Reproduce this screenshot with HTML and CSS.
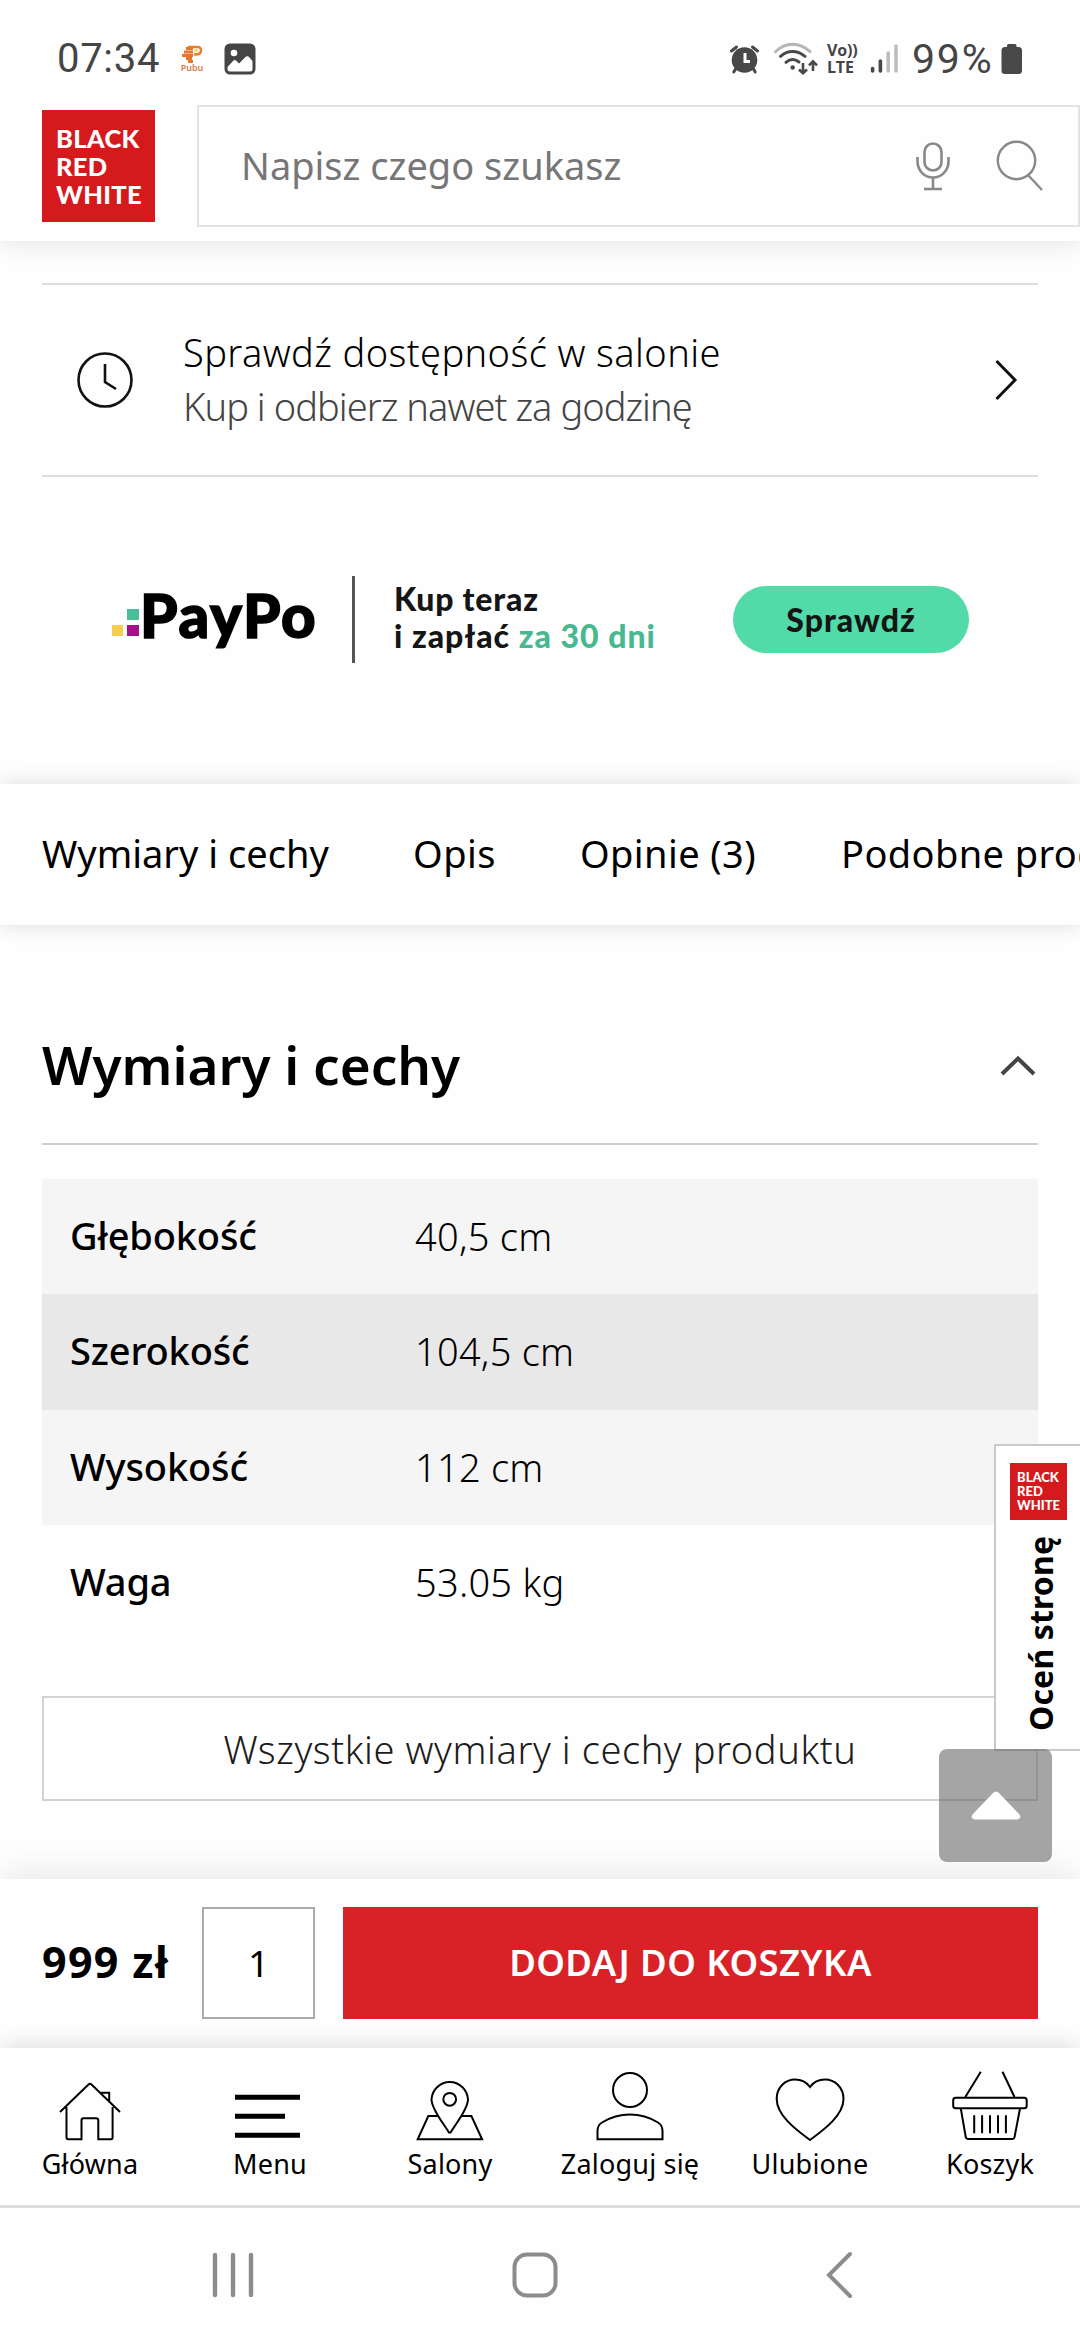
FILE: index.html
```html
<!DOCTYPE html>
<html lang="pl">
<head>
<meta charset="utf-8">
<title>Black Red White</title>
<link rel="stylesheet" href="styles.css">
</head>
<body>
<div class="app">
  <div class="status">
    <span class="clock">07:34</span>
    <span class="pubu">
      <svg width="22" height="18" viewBox="0 0 22 18"><path d="M5 3.500H12M3 7H12M1 10.500H12M5 13.500H11M7 16.500H12" fill="none" stroke="#e5752b" stroke-width="2.800"/><path d="M7 2H16.500Q20.500 2 20 6T13 9.500" fill="none" stroke="#ec7c26" stroke-width="2.400"/><path d="M13 4H17V7H13Z" fill="#f7dc7a"/></svg>
      <b>Pubu</b>
    </span>
    <svg class="gallery" width="32" height="32" viewBox="0 0 32 32"><rect x=".5" y=".5" width="31" height="31" rx="5.500" fill="#454545"/><circle cx="10" cy="10" r="3.300" fill="#fff"/><path d="M3.500 24 9.500 17.500Q11 16.500 12.500 18L15 20.500 21.500 14Q23.500 12.500 25.500 14.500L28.500 18V26Q28.500 28.500 26 28.500H6Q3.500 28.500 3.500 26Z" fill="#fff"/></svg>
    <svg class="alarm" width="34" height="36" viewBox="0 0 34 36"><circle cx="16.500" cy="19" r="12.800" fill="#484848"/><g fill="none" stroke="#484848" stroke-width="3" stroke-linecap="round"><path d="M3.500 10 8.500 6M29.500 10 24.500 6M7.500 28 5.800 31M25.500 28 27.200 31"/></g><path d="M17 12V20.500H22" fill="none" stroke="#fff" stroke-width="3"/></svg>
    <svg class="wifi" width="46" height="36" viewBox="0 0 46 36"><g fill="none" stroke="#484848" stroke-width="3" stroke-linecap="round"><path d="M2.500 10.700Q10 3.200 19.500 3.200T37 10.700" stroke="#b5b5b5"/><path d="M7.500 15.300Q13 10.500 19.500 10.500T32 15.300M13 21.300Q19.500 16 26 21"/></g><circle cx="19.700" cy="26.500" r="2.200" fill="#484848"/><path d="M30 22V32M26 28.500 30 32.300 34 28.500M40 30V20.500M36 24.300 40 20.300 44 24.300" fill="none" stroke="#484848" stroke-width="2.600"/></svg>
    <span class="volte"><b>Vo))</b><b>LTE</b></span>
    <svg class="signal" width="30" height="36" viewBox="0 0 30 36"><g fill="none" stroke="#484848" stroke-width="3.600" stroke-linecap="round"><path d="M2.600 27.500V30M10.400 20V30"/><path d="M18.200 12V30M26 5V30" stroke="#bdbdbd"/></g></svg>
    <span class="percent">99%</span>
    <svg class="battery" width="22" height="32" viewBox="0 0 22 32"><path d="M6 4V2.500Q6 1 7.500 1H14Q15.500 1 15.500 2.500V4H17.500Q21 4 21 7.500V27.500Q21 31 17.500 31H4Q.5 31 .5 27.500V7.500Q.5 4 4 4Z" fill="#484848"/></svg>
  </div>

  <header class="header">
    <div class="brand"><span>BLACK</span><span>RED</span><span>WHITE</span></div>
    <div class="search">
      <span class="placeholder">Napisz czego szukasz</span>
      <svg width="36" height="50" viewBox="0 0 36 50"><g fill="none" stroke="#888" stroke-width="2.600"><rect x="9.500" y="2.500" width="17" height="27" rx="8.500"/><path d="M2.500 16V20.500A15.500 16 0 0 0 33.500 20.500V16M18 36.500V48M9 48H27"/></g></svg>
      <svg class="loupe" width="50" height="54" viewBox="0 0 50 54"><g fill="none" stroke="#888" stroke-width="2.400"><circle cx="21.500" cy="21.500" r="18.700"/><path d="M33 36 47 51"/></g></svg>
    </div>
  </header>

  <main class="main">
    <div class="store">
      <svg width="58" height="58" viewBox="0 0 58 58"><g fill="none" stroke="#111" stroke-width="2.600"><circle cx="29" cy="29" r="26.500"/><path d="M29 13V31L40 38"/></g></svg>
      <div class="store-text">
        <span class="store-title">Sprawdź dostępność w salonie</span>
        <span class="store-sub">Kup i odbierz nawet za godzinę</span>
      </div>
      <svg width="24" height="42" viewBox="0 0 24 42"><path d="M2.500 2 21 21 2.500 40" fill="none" stroke="#111" stroke-width="3"/></svg>
    </div>

    <div class="paypo">
      <svg class="pixels" width="26" height="30" viewBox="0 0 26 30"><path d="M0 17H11V28H0Z" fill="#f6cd4c"/><path d="M15 17H27V28H15Z" fill="#a4108c"/><path d="M15 1H27V12H15Z" fill="#48be9a"/></svg>
      <span class="paypo-name">PayPo</span>
      <span class="rule"></span>
      <div class="paypo-text">
        <span class="line1">Kup teraz</span>
        <span class="line2">i zapłać <em>za 30 dni</em></span>
      </div>
      <span class="pill">Sprawdź</span>
    </div>

    <nav class="tabs">
      <span class="t1">Wymiary i cechy</span>
      <span class="t2">Opis</span>
      <span class="t3">Opinie (3)</span>
      <span class="t4">Podobne produkty</span>
    </nav>

    <section class="specs">
      <div class="specs-head">
        <h2>Wymiary i cechy</h2>
        <svg width="40" height="26" viewBox="0 0 40 26"><path d="M4 21 20 5.500 36 21" fill="none" stroke="#444" stroke-width="4"/></svg>
      </div>
      <dl class="table">
        <div class="row"><dt>Głębokość</dt><dd>40,5 cm</dd></div>
        <div class="row dark"><dt>Szerokość</dt><dd>104,5 cm</dd></div>
        <div class="row"><dt>Wysokość</dt><dd>112 cm</dd></div>
        <div class="row plain"><dt>Waga</dt><dd>53.05 kg</dd></div>
      </dl>
      <div class="all">Wszystkie wymiary i cechy produktu</div>
    </section>
  </main>

  <div class="buy">
    <span class="price">999 zł</span>
    <span class="qty">1</span>
    <span class="add">DODAJ DO KOSZYKA</span>
  </div>

  <nav class="bottom">
    <div class="item"><svg width="80" height="76" viewBox="0 0 80 76"><path d="M10 43 38.500 15.500Q40 14.200 41.500 15.500L70 43M16.500 38V68.500Q16.500 70.300 18.300 70.300H31.500V51.500Q31.500 49.300 33.500 49.300H46Q48.300 49.300 48.300 51.500V70.300H61Q62.600 70.300 62.600 68.500V38M51 23.700H59.200V32"/></svg><span>Główna</span></div>
    <div class="item"><svg width="80" height="76" viewBox="0 0 80 76"><path d="M5 28.300H70M5 47.300H55M5 66.300H70" stroke-width="5"/></svg><span>Menu</span></div>
    <div class="item"><svg width="80" height="76" viewBox="0 0 80 76"><path d="M38 62C33 54 21.500 40 21.500 30.300A18.300 18.600 0 0 1 58 30.300C58 40 46.500 54 41.500 62Q39.700 65.500 38 62ZM28 47H18.300L7.700 70.300H72.100L61.400 47H51.400"/><circle cx="39.700" cy="30.300" r="6.400"/></svg><span>Salony</span></div>
    <div class="item"><svg width="80" height="76" viewBox="0 0 80 76"><circle cx="40" cy="21" r="17"/><path d="M7.500 70.300V62Q7.500 56 12 53.500 25 45.500 40 45.500T68 53.500Q72.500 56 72.500 62V70.300Z"/></svg><span>Zaloguj się</span></div>
    <div class="item"><svg width="80" height="76" viewBox="0 0 80 76"><path d="M40 71C25 60 6.700 46 6.700 30 6.700 18 15.500 10.500 25 10.500 31.500 10.500 36.500 13 40 18 43.500 13 48.500 10.500 55 10.500 64.500 10.500 73.500 18 73.500 30 73.500 46 55 60 40 71Z"/></svg><span>Ulubione</span></div>
    <div class="item"><svg width="80" height="76" viewBox="0 0 80 76"><path d="M30.800 2.700 15.300 28M52.500 2.700 64.500 28M10.800 39.500 15.800 68.300Q16.200 70 18 70H62.500Q64 70 64.500 68.300L70 39.500M24.200 46.300V64.300M32.100 46.300V64.300M40 46.300V64.300M48 46.300V64.300M55.900 46.300V64.300"/><rect x="3.200" y="28.700" width="73.500" height="10.500" rx="2.500"/></svg><span>Koszyk</span></div>
  </nav>

  <div class="system">
    <svg width="44" height="46" viewBox="0 0 44 46"><path d="M5 3V43M23 3V43M41 3V43" stroke-width="4.400"/></svg>
    <svg class="home" width="46" height="46" viewBox="0 0 46 46"><rect x="2.500" y="2.500" width="41" height="41" rx="12.500"/></svg>
    <svg width="28" height="48" viewBox="0 0 28 48"><path d="M25 3 4 24 25 45"/></svg>
  </div>

  <aside class="rate">
    <div class="brand small"><span>BLACK</span><span>RED</span><span>WHITE</span></div>
    <span class="rate-text">Oceń stronę</span>
  </aside>
  <span class="totop"><svg width="52" height="32" viewBox="0 0 52 32"><path d="M5 29.500Q0 28.500 2.500 24.500L23 3Q26 0 29 3L49.500 24.500Q52 28.500 47 29.500Z" fill="#fff"/></svg></span>
</div>
</body>
</html>
```
FILE: styles.css
```css
* { box-sizing: border-box; }
body { margin: 0; background: #fefefe; color: #000; font-family: "Noto Sans", "Open Sans", sans-serif; }
svg { display: block; flex: none; overflow: visible; }
.app { position: relative; display: flex; flex-direction: column; width: 1080px; height: 2340px; overflow: hidden; white-space: nowrap; }

.status { flex: none; height: 105px; padding: 12px 57px 0; display: flex; align-items: center; color: #454545; background: #fefefe; position: relative; z-index: 3; }
.clock, .percent { font-family: Roboto, sans-serif; font-size: 40px; line-height: 40px; letter-spacing: .7px; }
.clock { width: 122px; }
.pubu { width: 45px; height: 28px; display: flex; flex-direction: column; align-items: center; padding-right: 19px; }
.pubu b { font: 600 9px/9px "Open Sans", sans-serif; color: #d8703a; }
.gallery { margin-right: auto; }
.wifi { margin-left: 11px; }
.volte { width: 32px; margin-left: 8px; display: flex; flex-direction: column; font: 700 16px/17px "Open Sans", sans-serif; letter-spacing: -.2px; }
.volte b { font-weight: 700; }
.signal { margin-left: 11px; }
.percent { width: 83px; margin: 0 6px 0 12px; font-size: 41px; letter-spacing: 1.8px; }

.header { flex: none; height: 136px; display: flex; align-items: flex-start; padding-left: 42px; background: #fefefe; box-shadow: 0 4px 22px rgba(0, 0, 0, .1); position: relative; z-index: 2; }
.brand { width: 113px; height: 112px; margin-top: 5px; padding: 14px 0 0 14px; background: #d51a1d; color: #fff; display: flex; flex-direction: column; font: 900 25.500px/28px Lato, sans-serif; letter-spacing: .3px; }
.search { width: 883px; height: 122px; margin-left: 42px; padding: 0 33px 0 42px; border: 2px solid #e3e3e3; display: flex; align-items: center; }
.placeholder { flex: 1; margin-top: -3px; font-size: 38px; color: #767676; }
.loupe { margin-left: 44px; }

.main { flex: 1; min-height: 0; overflow: hidden; padding-top: 42px; }
.store { height: 194px; margin: 0 42px; padding: 0 20px 0 34px; border: solid #ddd; border-width: 2px 0; display: flex; align-items: center; }
.store-text { flex: 1; display: flex; flex-direction: column; margin: -2px 0 0 49px; font-size: 38px; line-height: 54px; font-weight: 300; letter-spacing: .4px; }
.store-sub { color: #444; letter-spacing: -.95px; }

.paypo { height: 285px; padding-left: 112px; display: flex; align-items: center; font-family: Lato, sans-serif; font-weight: 900; color: #151515; }
.pixels { margin-top: 7px; }
.paypo-name { width: 214px; font-size: 60px; line-height: 60px; margin: -9px 0 0 0; padding-left: 2px; letter-spacing: 1.7px; color: #000; -webkit-text-stroke: 1.500px #000; }
.rule { width: 3px; height: 87px; background: #555; }
.paypo-text { width: 339px; margin: -6px 0 0 39px; display: flex; flex-direction: column; font-size: 32px; line-height: 37px; }
.line1 { letter-spacing: .8px; }
.line2 { letter-spacing: 1px; }
.paypo-text em { font-style: normal; color: #48b890; }
.pill { width: 236px; height: 67px; border-radius: 34px; background: #52dba8; display: flex; align-items: center; justify-content: center; font-size: 32px; letter-spacing: 1px; }

.tabs { height: 141px; margin-top: 22px; padding: 0 0 4px 42px; display: flex; align-items: center; background: #fefefe; box-shadow: 0 0 20px rgba(0, 0, 0, .14); font-size: 38px; }
.tabs span { flex: none; }
.t1 { width: 371px; }
.t2 { width: 167px; letter-spacing: .5px; }
.t3 { width: 261px; letter-spacing: .4px; }
.t4 { letter-spacing: .4px; }

.specs { padding: 63px 42px 0; }
.specs-head { height: 157px; border-bottom: 2px solid #ccc; display: flex; align-items: center; justify-content: space-between; }
.specs-head h2 { margin: -2px 0 0; font-size: 53px; font-weight: 600; }
.table { margin: 34px 0 0; }
.row { height: 115.300px; padding: 0 0 3px 28px; background: #f5f5f5; display: flex; align-items: center; font-size: 38px; }
.row.dark { background: #e8e8e8; }
.row.plain { background: none; }
.row dt { width: 345px; font-weight: 500; letter-spacing: -.15px; }
.row dd { margin: 2px 0 0; font-weight: 300; letter-spacing: .25px; }
.all { height: 105px; margin-top: 56px; border: 2px solid #d2d2d2; display: flex; align-items: center; justify-content: center; font-size: 38px; font-weight: 300; letter-spacing: .58px; color: #1c1c1c; }

.buy { flex: none; height: 169px; padding: 28px 42px 0; display: flex; line-height: 110px; background: #fefefe; box-shadow: 0 -4px 34px rgba(0, 0, 0, .1); position: relative; z-index: 2; }
.price { width: 160px; font-size: 43px; font-weight: 700; letter-spacing: 1.3px; }
.qty { width: 113px; height: 112px; border: 2px solid #aaa; line-height: 107px; text-align: center; font-size: 37px; }
.add { flex: 1; height: 112px; margin-left: 28px; background: #d92228; color: #fff; text-align: center; font-size: 36.500px; font-weight: 600; letter-spacing: .4px; }

.bottom { flex: none; height: 160px; padding-top: 21px; display: grid; grid-template-columns: repeat(6, 180px); background: #fefefe; border-bottom: 3px solid #ddd; box-shadow: 0 -2px 22px rgba(0, 0, 0, .14); position: relative; z-index: 3; }
.item { display: flex; flex-direction: column; align-items: center; gap: 2px; font-size: 27px; line-height: 34px; letter-spacing: .2px; }
.item svg { fill: none; stroke: #000; stroke-width: 2; }

.system { flex: none; height: 132px; padding: 1px 227px 0 210px; display: flex; align-items: center; background: #fefefe; position: relative; z-index: 3; }
.system svg { fill: none; stroke: #8c8c8c; stroke-width: 4; stroke-linecap: round; }
.system .home { margin: 0 auto 0 258px; }

.rate { position: absolute; z-index: 1; left: 994px; top: 1444px; width: 90px; height: 307px; border: 2px solid #c9c9c9; background: #fefefe; padding: 17px 0 0 14px; }
.brand.small { width: 57px; height: 57px; margin: 0; padding: 7px 0 0 7px; font-size: 13px; line-height: 14px; letter-spacing: 0; }
.rate-text { display: block; width: 50px; height: 196px; margin: 15px 0 0 6px; writing-mode: vertical-rl; transform: rotate(180deg); font-size: 32px; line-height: 50px; font-weight: 700; letter-spacing: .15px; }
.totop { position: absolute; z-index: 4; left: 939px; top: 1749px; width: 113px; height: 113px; border-radius: 8px; background: rgba(100, 100, 100, .58); display: flex; align-items: center; justify-content: center; }
```
